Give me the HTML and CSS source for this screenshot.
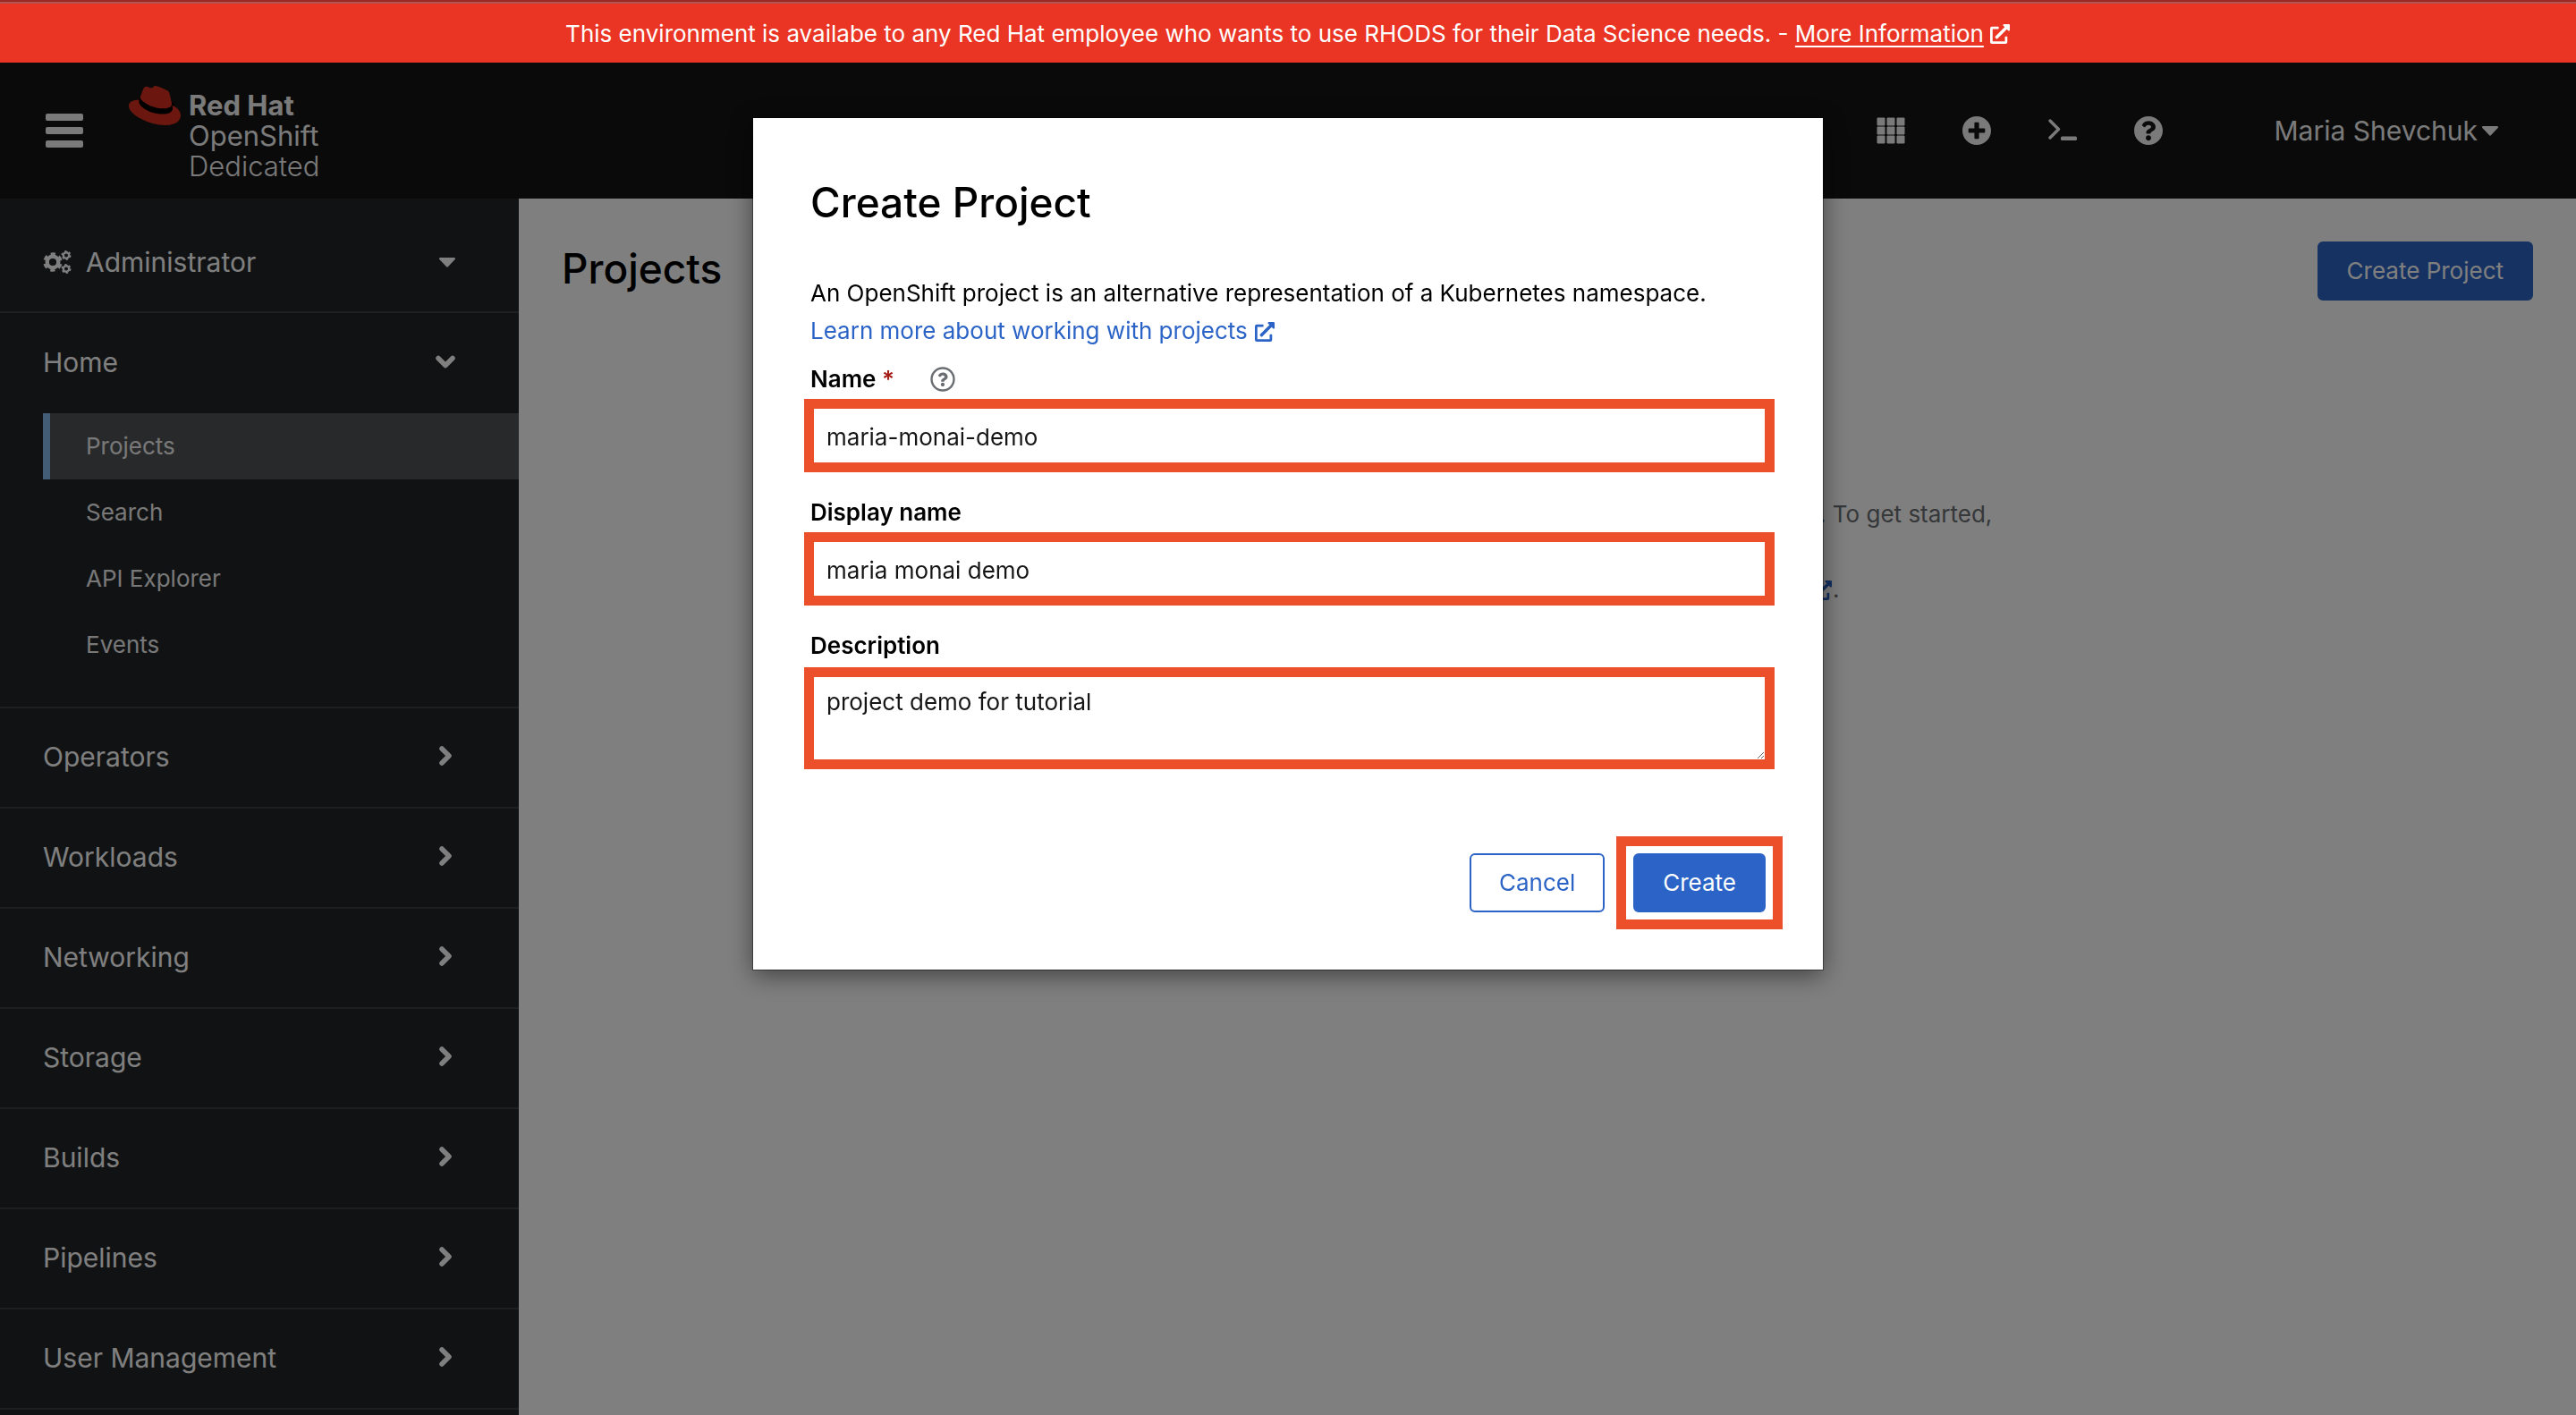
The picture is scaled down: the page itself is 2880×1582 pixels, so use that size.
FILE: index.html
```html
<!DOCTYPE html>
<html lang="en">
<head>
<meta charset="utf-8">
<meta name="viewport" content="width=device-width, initial-scale=1">
<title>Projects · Red Hat OpenShift Dedicated</title>
<link rel="stylesheet" href="styles.css">
</head>
<body>
<svg class="sprite" aria-hidden="true">
  <symbol id="external" viewBox="0 0 512 512"><path d="M432,320H400a16,16,0,0,0-16,16V448H64V128H208a16,16,0,0,0,16-16V80a16,16,0,0,0-16-16H48A48,48,0,0,0,0,112V464a48,48,0,0,0,48,48H400a48,48,0,0,0,48-48V336A16,16,0,0,0,432,320ZM488,0h-128c-21.37,0-32.05,25.91-17,41l35.73,35.73L135,320.37a24,24,0,0,0,0,34L157.67,377a24,24,0,0,0,34,0L435.28,133.32,471,169c15,15,41,4.5,41-17V24A24,24,0,0,0,488,0Z"/></symbol>
  <symbol id="chevron-right" viewBox="0 0 24 24"><path d="M8 3l8 8-8 8" fill="none" stroke="currentColor" stroke-width="5.5" stroke-linecap="round" stroke-linejoin="round"/></symbol>
  <symbol id="chevron-down" viewBox="0 0 24 24"><path d="M4 7.500l8 8 8-8" fill="none" stroke="currentColor" stroke-width="5.500" stroke-linecap="round" stroke-linejoin="round"/></symbol>
  <symbol id="caret" viewBox="0 0 24 24"><path d="M4.200 7h15.600c1.100 0 1.700 1.300.9 2.100l-7.600 8c-.6.7-1.600.7-2.200 0l-7.600-8C2.500 8.300 3.100 7 4.200 7z"/></symbol>
</svg>

<div class="banner" role="status">
  <span>This environment is availabe to any Red Hat employee who wants to use RHODS for their Data Science needs. - <a class="banner-link" href="#">More Information</a></span>
  <svg class="icon-external" aria-hidden="true"><use href="#external"/></svg>
</div>

<header class="masthead">
  <button class="menu-toggle" type="button" aria-label="Toggle navigation"><i></i><i></i><i></i></button>
  <a class="logo" href="#">
    <svg class="logo-hat" viewBox="0 2.900 24 18.200" aria-hidden="true">
      <path fill="#000" d="M5.300 8l-.6 1.600-.9 2.400 6 4.500 8 1.200 3.600-2-.2-3.800-.9-1.500z"/>
      <path d="M16.009 13.386c1.577 0 3.860-.326 3.860-2.202a1.765 1.765 0 0 0-.04-.431l-.94-4.080c-.216-.898-.406-1.305-1.982-2.093-1.223-.625-3.888-1.658-4.676-1.658-.733 0-.947.946-1.822.946-.842 0-1.467-.706-2.255-.706-.757 0-1.250.515-1.630 1.576 0 0-1.060 2.990-1.197 3.424a.81.81 0 0 0-.028.245c0 1.162 4.577 4.979 10.710 4.979m4.101-1.435c.218 1.032.218 1.140.218 1.277 0 1.765-1.984 2.745-4.593 2.745-5.895.004-11.060-3.451-11.060-5.734a2.326 2.326 0 0 1 .19-.925C2.746 9.415 0 9.794 0 12.217c0 3.969 9.405 8.861 16.851 8.861 5.710 0 7.149-2.582 7.149-4.620 0-1.605-1.387-3.425-3.887-4.512"/>
    </svg>
    <span class="logo-text"><b>Red Hat</b><span>OpenShift</span><span class="logo-light">Dedicated</span></span>
  </a>
  <div class="tools">
    <button type="button" aria-label="Application launcher"><svg viewBox="0 0 32 32" aria-hidden="true"><path d="M1 2h8v8H1zM12 2h8v8h-8zM23 2h8v8h-8zM1 12h8v8H1zM12 12h8v8h-8zM23 12h8v8h-8zM1 22h8v8H1zM12 22h8v8h-8zM23 22h8v8h-8z" stroke="currentColor" stroke-width="1" stroke-linejoin="round"/></svg></button>
    <button type="button" aria-label="Import YAML"><svg viewBox="8 8 496 496" aria-hidden="true"><path d="M256 8C119 8 8 119 8 256s111 248 248 248 248-111 248-248S393 8 256 8zm144 276c0 6.600-5.400 12-12 12h-92v92c0 6.600-5.400 12-12 12h-56c-6.600 0-12-5.400-12-12v-92h-92c-6.600 0-12-5.400-12-12v-56c0-6.600 5.400-12 12-12h92v-92c0-6.600 5.400-12 12-12h56c6.600 0 12 5.400 12 12v92h92c6.600 0 12 5.400 12 12v56z"/></svg></button>
    <button type="button" aria-label="Command line terminal"><svg viewBox="0 0 32 32" aria-hidden="true"><path d="M2 5l9.500 9.500L2 24" fill="none" stroke="currentColor" stroke-width="3.400" stroke-linecap="round" stroke-linejoin="round"/><rect x="14" y="22.500" width="18" height="4.500" rx="1.500"/></svg></button>
    <button type="button" aria-label="Help"><svg viewBox="8 8 496 496" aria-hidden="true"><path d="M504 256c0 136.997-111.043 248-248 248S8 392.997 8 256C8 119.083 119.043 8 256 8s248 111.083 248 248zM262.655 90c-54.497 0-89.255 22.957-116.549 63.758-3.536 5.286-2.353 12.415 2.715 16.258l34.699 26.310c5.205 3.947 12.621 3.008 16.665-2.122 17.864-22.658 30.113-35.797 57.303-35.797 20.429 0 45.698 13.148 45.698 32.958 0 14.976-12.363 22.667-32.534 33.976C247.128 238.528 216 254.941 216 296v4c0 6.627 5.373 12 12 12h56c6.627 0 12-5.373 12-12v-1.333c0-28.462 83.186-29.647 83.186-106.667 0-58.002-60.165-102-116.531-102zM256 338c-25.365 0-46 20.635-46 46 0 25.364 20.635 46 46 46s46-20.636 46-46c0-25.365-20.635-46-46-46z"/></svg></button>
    <button class="user" type="button">Maria Shevchuk<svg aria-hidden="true"><use href="#caret"/></svg></button>
  </div>
</header>

<div class="page">
  <nav class="sidebar" aria-label="Main">
    <button class="perspective" type="button">
      <svg class="cogs" viewBox="0 0 32 26" fill="none" stroke="currentColor" aria-hidden="true">
        <g fill="none">
          <circle cx="11" cy="13" r="6.300" stroke-width="4.400"/><circle cx="11" cy="13" r="9.200" stroke-width="3" stroke-dasharray="5.200 4.434" transform="rotate(14 11 13)"/>
          <circle cx="26" cy="5.500" r="3.200" stroke-width="2.400"/><circle cx="26" cy="5.500" r="4.600" stroke-width="1.800" stroke-dasharray="2.400 2.417"/>
          <circle cx="26" cy="20.500" r="3.200" stroke-width="2.400"/><circle cx="26" cy="20.500" r="4.600" stroke-width="1.800" stroke-dasharray="2.400 2.417"/>
        </g>
      </svg>
      <span>Administrator</span>
      <svg class="marker" aria-hidden="true"><use href="#caret"/></svg>
    </button>
    <section class="nav-open">
      <button class="nav-group" type="button" aria-expanded="true">Home<svg class="marker" aria-hidden="true"><use href="#chevron-down"/></svg></button>
      <ul class="nav-list">
        <li><a class="nav-link current" href="#" aria-current="page">Projects</a></li>
        <li><a class="nav-link" href="#">Search</a></li>
        <li><a class="nav-link" href="#">API Explorer</a></li>
        <li><a class="nav-link" href="#">Events</a></li>
      </ul>
    </section>
    <button class="nav-group ruled" type="button">Operators<svg class="marker" aria-hidden="true"><use href="#chevron-right"/></svg></button>
    <button class="nav-group ruled" type="button">Workloads<svg class="marker" aria-hidden="true"><use href="#chevron-right"/></svg></button>
    <button class="nav-group ruled" type="button">Networking<svg class="marker" aria-hidden="true"><use href="#chevron-right"/></svg></button>
    <button class="nav-group ruled" type="button">Storage<svg class="marker" aria-hidden="true"><use href="#chevron-right"/></svg></button>
    <button class="nav-group ruled" type="button">Builds<svg class="marker" aria-hidden="true"><use href="#chevron-right"/></svg></button>
    <button class="nav-group ruled" type="button">Pipelines<svg class="marker" aria-hidden="true"><use href="#chevron-right"/></svg></button>
    <button class="nav-group ruled" type="button">User Management<svg class="marker" aria-hidden="true"><use href="#chevron-right"/></svg></button>
  </nav>
  <main class="content">
    <div class="content-head">
      <h1 class="title">Projects</h1>
      <button class="button primary" type="button">Create Project</button>
    </div>
    <div class="intro">
      <p class="intro-lead">. To get started,</p>
      <p><a class="link" href="#" aria-label="Documentation"><svg class="icon-external" aria-hidden="true"><use href="#external"/></svg></a>.</p>
    </div>
  </main>
</div>

<div class="backdrop">
  <form class="modal" role="dialog" aria-labelledby="modal-title">
    <h2 class="title" id="modal-title">Create Project</h2>
    <div class="modal-text">
      <p>An OpenShift project is an alternative representation of a Kubernetes namespace.</p>
      <p><a class="link" href="#">Learn more about working with projects <svg class="icon-external" aria-hidden="true"><use href="#external"/></svg></a></p>
    </div>
    <div class="field">
      <div class="field-head">
        <label for="name">Name <span class="required">*</span></label>
        <button class="field-help" type="button" aria-label="More about the name"><svg viewBox="0 0 512 512" aria-hidden="true"><circle cx="256" cy="256" r="228" fill="none" stroke="currentColor" stroke-width="44"/><path transform="translate(43 46) scale(.83)" d="M262.655 90c-54.497 0-89.255 22.957-116.549 63.758-3.536 5.286-2.353 12.415 2.715 16.258l34.699 26.310c5.205 3.947 12.621 3.008 16.665-2.122 17.864-22.658 30.113-35.797 57.303-35.797 20.429 0 45.698 13.148 45.698 32.958 0 14.976-12.363 22.667-32.534 33.976C247.128 238.528 216 254.941 216 296v4c0 6.627 5.373 12 12 12h56c6.627 0 12-5.373 12-12v-1.333c0-28.462 83.186-29.647 83.186-106.667 0-58.002-60.165-102-116.531-102zM256 338c-25.365 0-46 20.635-46 46 0 25.364 20.635 46 46 46s46-20.636 46-46c0-25.365-20.635-46-46-46z"/></svg></button>
      </div>
      <input class="control" id="name" type="text" value="maria-monai-demo" required>
    </div>
    <div class="field">
      <label for="display-name">Display name</label>
      <input class="control" id="display-name" type="text" value="maria monai demo">
    </div>
    <div class="field">
      <label for="description">Description</label>
      <textarea class="control area" id="description">project demo for tutorial</textarea>
    </div>
    <div class="actions">
      <button class="button secondary" type="button">Cancel</button>
      <button class="button primary marked" type="submit">Create</button>
    </div>
  </form>
</div>
</body>
</html>
```
FILE: styles.css
```css
:root {
  --blue: #2b64c6;
  --mark: #ec502b;
  --small: 26px;
  --medium: 30px;
  --large: 46px;
}

* { box-sizing: border-box; }

body {
  margin: 0;
  min-height: 100vh;
  display: flex;
  flex-direction: column;
  font: 400 var(--small)/42px Inter, "Liberation Sans", sans-serif;
  color: #000;
  background: #fff;
}

h1, h2, p, ul { margin: 0; padding: 0; }
ul { list-style: none; }
svg { fill: currentColor; flex: none; }
button { font: inherit; color: inherit; background: none; border: 0; padding: 0; }
.sprite { display: none; }

.title { font-size: var(--large); font-weight: 500; line-height: 60px; }
.link { color: var(--blue); text-decoration: none; }
.icon-external { width: 24px; height: 22px; vertical-align: -3px; }

/* Banner */
.banner {
  position: relative;
  z-index: 2;
  display: flex;
  justify-content: center;
  align-items: center;
  gap: 6px;
  height: 70px;
  border-top: 2px solid #9b2822;
  box-shadow: inset 0 2px #b15550;
  padding-top: 4px;
  background: #ea3424;
  color: #fff;
}
.banner-link { color: inherit; text-decoration-thickness: 2px; text-underline-offset: 4px; }

/* Masthead */
.masthead {
  display: flex;
  align-items: center;
  min-height: 152px;
  padding: 0 84px 0 51px;
  background: #141414;
  color: #f4f4f4;
}
.menu-toggle { display: grid; gap: 7px; width: 42px; }
.menu-toggle i { height: 8px; border-radius: 2px; background: #f4f4f4; }
.logo {
  display: flex;
  align-items: flex-start;
  gap: 9px;
  margin: 6px 0 0 51px;
  color: inherit;
  text-decoration: none;
}
.logo-hat { width: 58px; height: 44px; color: #d62e1f; }
.logo-text { display: grid; padding-top: 5px; font-size: 31px; line-height: 34px; }
.logo-light { font-weight: 300; }
.tools { display: flex; align-items: center; gap: 64px; margin-left: auto; }
.tools svg { display: block; width: 32px; height: 32px; }
.tools .user { display: flex; align-items: center; gap: 2px; margin-left: 60px; font-size: var(--medium); }
.tools .user svg { width: 24px; height: 24px; }

/* Page and sidebar */
.page { flex: 1; display: flex; }
.sidebar {
  flex: 0 0 580px;
  display: flex;
  flex-direction: column;
  background: #222427;
  color: #fff;
  font-size: var(--medium);
}
.perspective {
  display: flex;
  align-items: center;
  gap: 16px;
  height: 128px;
  padding: 16px 68px 0 48px;
  border-bottom: 2px solid #3c3f42;
}
.cogs { width: 32px; height: 26px; }
.marker { width: 24px; height: 24px; margin-left: auto; }
.nav-group {
  display: flex;
  align-items: center;
  width: 100%;
  height: 112px;
  padding: 0 70px 2px 48px;
  text-align: left;
}
.ruled, .nav-open { border-bottom: 2px solid #3c3f42; }
.nav-open { padding-bottom: 32px; }
.nav-list { padding-left: 48px; font-size: var(--small); }
.nav-link {
  display: block;
  padding: 16px 0 16px 40px;
  border-left: 8px solid transparent;
  color: #f0f0f0;
  text-decoration: none;
}
.nav-link.current { border-color: #88bbee; background: #505356; }

/* Content */
.content { flex: 1; padding: 48px; }
.content-head { display: flex; align-items: flex-start; justify-content: space-between; }
.intro { display: grid; gap: 42px; margin: 218px 0 0 calc(50vw - 43px); color: #6a6e73; }
.intro-lead { padding-left: 9px; }

.button {
  position: relative;
  padding: 10px 31px;
  border: 2px solid var(--blue);
  border-radius: 6px;
  white-space: nowrap;
}
.primary { background: var(--blue); color: #fff; }
.secondary { color: var(--blue); }
.marked::after {
  content: "";
  position: absolute;
  inset: -21px;
  border: 11px solid var(--mark);
}

/* Modal */
.backdrop {
  position: fixed;
  inset: 0;
  z-index: 1;
  display: flex;
  justify-content: center;
  align-items: flex-start;
  padding-top: 132px;
  background: rgba(0, 0, 0, .5);
}
.modal {
  width: 1196px;
  max-width: 100%;
  padding: 64px;
  background: #fff;
  box-shadow: 0 6px 26px rgba(0, 0, 0, .5), 0 0 0 1px rgba(0, 0, 0, .4);
}
.modal-text { margin: 51px 0 12px; }
.field { margin-bottom: 24px; }
.field-head { display: flex; align-items: center; gap: 40px; }
.field label { font-weight: 600; }
.required { color: #a51c14; }
.field-help { color: #6a6e73; }
.field-help svg { display: block; width: 28px; height: 28px; }
.control {
  display: block;
  width: calc(100% + 17px);
  height: 82px;
  margin: 1px 0 0 -7px;
  padding: 2px 14px 0;
  border: 11px solid var(--mark);
  border-radius: 0;
  outline: 0;
  background: #fff;
  color: #151515;
  font: inherit;
}
.area { height: 114px; margin-top: 3px; padding-top: 7px; overflow: hidden; resize: vertical; }
.actions { display: flex; justify-content: flex-end; gap: 32px; margin-top: 94px; }
```
